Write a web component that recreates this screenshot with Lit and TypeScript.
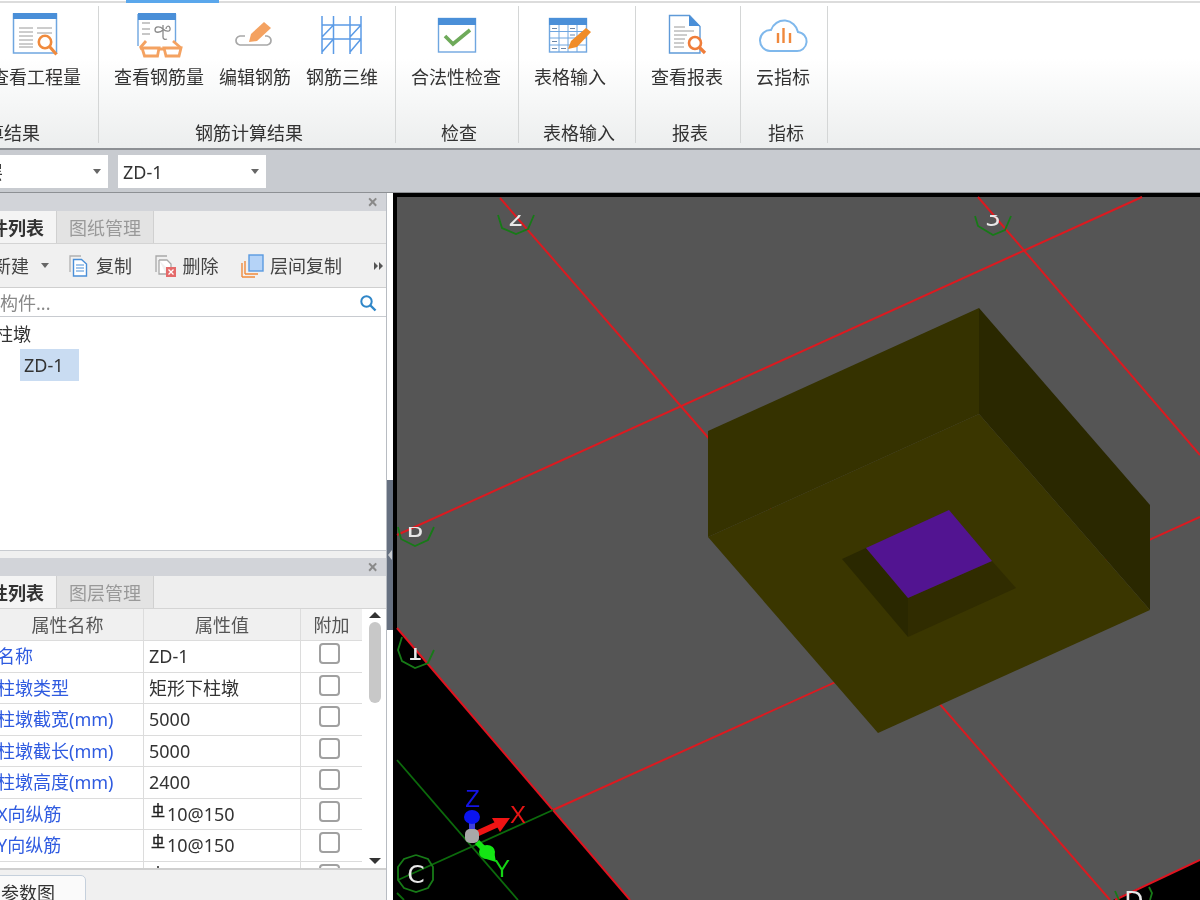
import { LitElement, html, svg, css } from 'lit';
import { customElement } from 'lit/decorators.js';

const rows = [
  { name: '名称', value: 'ZD-1' },
  { name: '柱墩类型', value: '矩形下柱墩' },
  { name: '柱墩截宽(mm)', value: '5000' },
  { name: '柱墩截长(mm)', value: '5000' },
  { name: '柱墩高度(mm)', value: '2400' },
  { name: 'X向纵筋', value: '10@150', rebar: true },
  { name: 'Y向纵筋', value: '10@150', rebar: true },
  { name: '', value: '10@150', rebar: true },
];

const BLUE = '#4a8fd8';
const ORANGE = '#f08a3c';

const iconReport = svg`
  <rect x="13.5" y="14" width="43" height="39" fill="#fff" stroke="#6fa6e0" stroke-width="1.5"/>
  <rect x="13" y="13" width="44" height="6" fill="${BLUE}"/>
  <path d="M19 28h14M19 32h14M19 36h14M19 40h14M19 44h14M19 47h14M37 28h15M37 33h15" stroke="#9a9a9a" fill="none"/>
  <circle cx="45" cy="42" r="6.2" fill="#fff" stroke="${ORANGE}" stroke-width="2.6"/>
  <path d="M49.5 46.5l7 8" stroke="${ORANGE}" stroke-width="3.2"/>`;

const iconGlasses = svg`
  <rect x="138" y="14" width="37.5" height="32" fill="#fff"/>
  <path d="M138 14v32M175.500 14v28" stroke="#6fa6e0" stroke-width="1.4"/>
  <rect x="138" y="13" width="38" height="7" fill="${BLUE}"/>
  <path d="M142 23h8M142 29h8M142 34h8" stroke="#8f8f8f" fill="none" stroke-width="1.2"/>
  <path d="M155 30c0-4 5-4 8-1s8 3 7-1c-1-3-4-2-4 1M155 30c0 3 5 3 8 0M163 25v12c0 2 2 3 4 2" stroke="#8a8a8a" fill="none" stroke-width="1.3"/>
  <path d="M142 48h17l-1.500 8h-13zM164 48h17l-2 8h-13z" fill="#fff" stroke="#f4a261" stroke-width="2.8"/>
  <path d="M159 49h5M142 48l-2 1M146 41l-6 7M173 41l8 7" stroke="#f4a261" stroke-width="2.8" fill="none"/>`;

const iconEdit = svg`
  <path d="M245 36h-5q-4 1-4 4.500t4 4.500h27q4-1 4-4.500t-4-4.500h-2" fill="none" stroke="#a8a8a8" stroke-width="1.7"/>
  <path d="M264 22l7 6-14 13-8 1 2-8z" fill="#f4a261"/>`;

const iconScaffold = svg`
  <path d="M322 16v38M333.500 16v38M350 16v38M361 16v38M322 25h39M322 39h39M322 37l11.500-12M322 52l11.500-13M350 37l11-12M350 52l11-13" stroke="#5b9be6" stroke-width="1.5" fill="none"/>`;

const iconCheck = svg`
  <rect x="438.500" y="18.500" width="37" height="33.500" fill="#fff" stroke="#6fa6e0" stroke-width="1.4"/>
  <rect x="438" y="18" width="38" height="7" fill="${BLUE}"/>
  <path d="M445 36l8 8 17-14" fill="none" stroke="#6eaa5a" stroke-width="3.6"/>`;

const iconTable = svg`
  <rect x="549.500" y="18.500" width="37" height="33.500" fill="#fff" stroke="#6fa6e0" stroke-width="1.4"/>
  <rect x="549" y="18" width="38" height="7" fill="${BLUE}"/>
  <path d="M559 25v27M568 25v27M577 25v27M549 31.500h38M549 38h38M549 45h38" stroke="#6fa6e0" fill="none"/>
  <path d="M552 28.500h5M570 28.500h5M552 41.500h5M552 48.500h5M561 48.500h5M570 35h5" stroke="#6b87a8" fill="none"/>
  <path d="M586 28l5 4-14 15-9 2 3-8z" fill="#f08c28"/>`;

const iconDoc = svg`
  <path d="M669.500 15.500h20l10.500 11v26.500h-30.500z" fill="#fff" stroke="#5f9ad8" stroke-width="1.4"/>
  <path d="M689 15l11 11h-11z" fill="${BLUE}"/>
  <path d="M674 27h11M674 31h20M674 35h13M674 39h11M674 43h10M674 47h10" stroke="#9a9a9a" fill="none"/>
  <circle cx="695" cy="43" r="6" fill="#fff" stroke="#ef7d3a" stroke-width="2.6"/>
  <path d="M699 47l6 6" stroke="#ef7d3a" stroke-width="3.2"/>`;

const iconCloud = svg`
  <path d="M770 51H796A9.500 9.500 0 0 0 798 32A14 14 0 0 0 771 30A10.500 10.500 0 0 0 770 51Z" fill="#fff" stroke="#7fb8ec" stroke-width="2"/>
  <path d="M778 33v10M783.500 28v15M790 33v10" stroke="#f0883c" stroke-width="2.4" fill="none"/>`;

// number glyph on the grid bubbles is cut by the clip box passed in
const bubble = (points: string, label: string, x: number, y: number, clipId?: string) => svg`
  <polyline points="${points}" fill="none" stroke="#177a17" stroke-width="1.8"/>
  <text x="${x}" y="${y}" class="axis" clip-path="${clipId ? `url(#${clipId})` : 'none'}">${label}</text>`;

@customElement('app-root')
export class AppRoot extends LitElement {
  renderRibbon() {
    return html`
      <div class="ribbon">
        <div class="tabline"><span class="tabmark"></span></div>
        <div class="groups">
          <div class="group first">
            <div class="btns">
              <div class="btn">
                <svg class="ic" viewBox="0 6 72 54">${iconReport}</svg>
                <span>查看工程量</span>
              </div>
            </div>
            <div class="glabel">工程量计算结果</div>
          </div>
          <div class="group">
            <div class="btns">
              <div class="btn">
                <svg class="ic" viewBox="114 6 90 54">${iconGlasses}</svg>
                <span>查看钢筋量</span>
              </div>
              <div class="btn">
                <svg class="ic" viewBox="219 6 72 54">${iconEdit}</svg>
                <span>编辑钢筋</span>
              </div>
              <div class="btn">
                <svg class="ic" viewBox="306 6 72 54">${iconScaffold}</svg>
                <span>钢筋三维</span>
              </div>
            </div>
            <div class="glabel">钢筋计算结果</div>
          </div>
          <div class="group">
            <div class="btns">
              <div class="btn">
                <svg class="ic" viewBox="411 6 90 54">${iconCheck}</svg>
                <span>合法性检查</span>
              </div>
            </div>
            <div class="glabel">检查</div>
          </div>
          <div class="group wide">
            <div class="btns">
              <div class="btn">
                <svg class="ic" viewBox="534 6 72 54">${iconTable}</svg>
                <span>表格输入</span>
              </div>
            </div>
            <div class="glabel">表格输入</div>
          </div>
          <div class="group">
            <div class="btns">
              <div class="btn">
                <svg class="ic" viewBox="651 6 72 54">${iconDoc}</svg>
                <span>查看报表</span>
              </div>
            </div>
            <div class="glabel">报表</div>
          </div>
          <div class="group">
            <div class="btns">
              <div class="btn">
                <svg class="ic" viewBox="756 6 54 54">${iconCloud}</svg>
                <span>云指标</span>
              </div>
            </div>
            <div class="glabel">指标</div>
          </div>
        </div>
      </div>
    `;
  }

  renderToolbar() {
    return html`
      <div class="combos">
        <div class="combo floor"><span>首层</span><i class="caret"></i></div>
        <div class="combo part"><span>ZD-1</span><i class="caret"></i></div>
      </div>
    `;
  }

  renderListPanel() {
    return html`
      <div class="panel-head"><span class="close">×</span></div>
      <div class="tabs">
        <div class="tab on first-tab">构件列表</div>
        <div class="tab">图纸管理</div>
      </div>
      <div class="tools">
        <div class="tool new-tool"><span>新建</span><i class="caret"></i></div>
        <div class="tool">
          <svg width="21" height="24" viewBox="0 0 21 24">
            <path d="M1 18V2h11" fill="none" stroke="#b0b0b0" stroke-width="1.3"/>
            <path d="M4.500 5.500h8l5 4.500v12h-13z" fill="#fff" stroke="#4a8fd8" stroke-width="1.4"/>
            <path d="M7 11h8M7 14h8M7 17h8" stroke="#4a8fd8" stroke-width="1.2"/>
          </svg>
          <span>复制</span>
        </div>
        <div class="tool">
          <svg width="22" height="24" viewBox="0 0 22 24">
            <path d="M1 18V2h11" fill="none" stroke="#a8a8a8" stroke-width="1.3"/>
            <path d="M4 6h8l4 4v8M4 6v14h7" fill="#fff" stroke="#a8a8a8" stroke-width="1.3"/>
            <rect x="11" y="13" width="10" height="10" fill="#e46a6a"/>
            <path d="M13.500 15.500l5 5M18.500 15.500l-5 5" stroke="#fff" stroke-width="1.3"/>
          </svg>
          <span>删除</span>
        </div>
        <div class="tool">
          <svg width="23" height="24" viewBox="0 0 23 24">
            <path d="M1 23V9M1 23h13M4 20V7M4 20h13" fill="none" stroke="#f08a3c" stroke-width="1.4"/>
            <rect x="8" y="1" width="14" height="16" fill="#b5d3f7" stroke="#5a9ae0" stroke-width="1.4"/>
          </svg>
          <span>层间复制</span>
        </div>
        <div class="more"><i></i><i></i></div>
      </div>
      <div class="search">
        <span class="placeholder">搜索构件...</span>
        <svg width="18" height="18" viewBox="0 0 18 18">
          <circle cx="7.500" cy="7.500" r="5.200" fill="none" stroke="#2f86c8" stroke-width="2"/>
          <path d="M11.500 11.500l5 5" stroke="#2f86c8" stroke-width="2.400"/>
        </svg>
      </div>
      <div class="tree">
        <div class="tree-root">柱墩</div>
        <div class="tree-leaf">ZD-1</div>
      </div>
    `;
  }

  renderPropPanel() {
    return html`
      <div class="panel-head"><span class="close">×</span></div>
      <div class="tabs">
        <div class="tab on first-tab">属性列表</div>
        <div class="tab">图层管理</div>
      </div>
      <div class="table-wrap">
        <div class="table">
          <div class="tr head">
            <div class="td head-name">属性名称</div>
            <div class="td">属性值</div>
            <div class="td">附加</div>
          </div>
          ${rows.map(
            (r) => html`
              <div class="tr">
                <div class="td name"><span>${r.name}</span></div>
                <div class="td val">
                  ${r.rebar
                    ? html`<svg class="rebar" width="14" height="15" viewBox="0 0 14 15">
                        <path d="M7 0v13M.5 13.500h13M3 3.500h8v6H3z" fill="none" stroke="#222" stroke-width="1.500"/>
                      </svg>`
                    : ''}${r.value}
                </div>
                <div class="td chk"><i class="box"></i></div>
              </div>
            `,
          )}
        </div>
        <div class="scroll">
          <i class="up"></i>
          <i class="thumb"></i>
          <i class="down"></i>
        </div>
      </div>
      <div class="bottom-tabs"><div class="btab">参数图</div></div>
    `;
  }

  renderCanvas() {
    return html`
      <svg class="scene" viewBox="393 193 807 707" width="807" height="707">
        <defs>
          <clipPath id="clip2"><rect x="490" y="215" width="60" height="30"/></clipPath>
          <clipPath id="clip3"><rect x="970" y="215" width="50" height="30"/></clipPath>
          <clipPath id="clipB"><rect x="395" y="527" width="40" height="30"/></clipPath>
          <clipPath id="clip1"><rect x="395" y="648" width="40" height="30"/></clipPath>
          <clipPath id="clipD"><rect x="1110" y="890" width="50" height="10"/></clipPath>
        </defs>
        <rect x="393" y="193" width="807" height="707" fill="#000"/>
        <polygon points="397,197 1200,197 1200,860 1113,900 630,900 397,628" fill="#555"/>

        <g fill="none" stroke="#dc1a20" stroke-width="2">
          <path d="M397 535L1142 197"/>
          <path d="M500 198L1110 900"/>
          <path d="M978 197L1200 455"/>
          <path d="M553 810L1200 517"/>
          <path d="M397 628L630 900" stroke="#e01420"/>
          <path d="M1115 900L1200 860" stroke="#e01420"/>
        </g>
        <g fill="none" stroke="#0c6a0c" stroke-width="1.8">
          <path d="M553 810L398 880"/>
          <path d="M397 760L518 900"/>
          <path d="M397 893L404 900"/>
        </g>

        ${bubble('498,215 502,228 516,234 528,229 534,215', '2', 516, 226, 'clip2')}
        ${bubble('975,216 978,226 993,235 1005,230 1011,216', '3', 993, 226, 'clip3')}
        ${bubble('398,527 401,539 415,546 428,540 434,527', 'B', 415, 537, 'clipB')}
        ${bubble('402,637 398,650 402,661 415,668 428,663 434,650', '1', 415, 660, 'clip1')}
        ${bubble('416,855 428,859 433,867 433,880 428,888 416,892 404,888 398,880 398,867 404,859 416,855', 'C', 416, 883)}
        ${bubble('1115,891 1119,900', 'D', 1134, 909, 'clipD')}
        <polyline points="1149,887 1152,893 1150,900" fill="none" stroke="#177a17" stroke-width="1.8"/>

        <polygon points="708,431 979,308 979,414 708,537" fill="#353200"/>
        <polygon points="979,308 1150,505 1150,610 979,414" fill="#2a2800"/>
        <polygon points="708,537 979,414 1150,610 878,733" fill="#3a3600"/>
        <polygon points="842,559 866,548 908,598 908,637" fill="#2a2800"/>
        <polygon points="908,598 992,561 1016,588 908,637" fill="#302c00"/>
        <polygon points="949,510 992,561 908,598 866,548" fill="#521491"/>

        <g>
          <path d="M472 835V822" stroke="#4040d8" stroke-width="6"/>
          <ellipse cx="472" cy="817" rx="8" ry="7" fill="#0a14f0"/>
          <text x="472.500" y="807" class="gizmo" fill="#1414e6">Z</text>
          <path d="M476 834L498 824" stroke="#f01414" stroke-width="6"/>
          <polygon points="492,818 510,818 500,832" fill="#f01414"/>
          <text x="518" y="823" class="gizmo" fill="#e61414">X</text>
          <path d="M477 842L490 855" stroke="#14e614" stroke-width="6"/>
          <ellipse cx="487" cy="852" rx="8" ry="7" fill="#14e614"/>
          <polygon points="483,858 494,851 496,862" fill="#14e614"/>
          <text x="502" y="877" class="gizmo" fill="#14d214">Y</text>
          <rect x="465" y="829" width="14" height="14" rx="5" fill="#a8a8a8"/>
        </g>
      </svg>
    `;
  }

  render() {
    return html`
      ${this.renderRibbon()}
      ${this.renderToolbar()}
      <div class="main">
        <div class="side">
          <section class="list-panel">${this.renderListPanel()}</section>
          <section class="prop-panel">${this.renderPropPanel()}</section>
        </div>
        <div class="splitter"><div class="grip"><i></i></div></div>
        <div class="canvas">${this.renderCanvas()}</div>
      </div>
    `;
  }

  static styles = css`
    :host {
      display: flex;
      flex-direction: column;
      width: 1200px;
      height: 900px;
      overflow: hidden;
      background: #c8cbd0;
      color: #333;
      font-family: 'Noto Sans', 'Noto Sans CJK SC', sans-serif;
      font-size: 18px;
      line-height: 24px;
      filter: blur(0.5px);
    }

    /* ribbon */
    .ribbon {
      height: 150px;
      flex: none;
      box-sizing: border-box;
      background: linear-gradient(#ffffff 0%, #ffffff 40%, #eceeee 100%);
      border-bottom: 2px solid #8d9094;
    }
    .tabline {
      height: 3px;
      background: linear-gradient(#fff 0 1px, #dcdcdc 1px);
    }
    .tabmark {
      display: block;
      width: 93px;
      height: 3px;
      margin-left: 126px;
      background: #5aa7ec;
    }
    .groups {
      display: flex;
      height: 137px;
      margin-top: 3px;
    }
    .group {
      flex: none;
      display: flex;
      flex-direction: column;
      padding: 0 17px 0 15px;
      border-right: 1px solid #d4d6d6;
      box-sizing: content-box;
    }
    .group.first {
      width: 225px;
      margin-left: -144px;
      align-items: flex-end;
      padding: 0 17px 0 0;
    }
    .group.first .glabel {
      width: 126px;
      padding: 0;
      margin: auto 41px 0 0;
    }
    .group.wide {
      padding-right: 29px;
    }
    .group.wide .glabel {
      margin-right: -29px;
    }
    .btns {
      display: flex;
      gap: 15px;
    }
    .btn {
      display: flex;
      flex-direction: column;
      align-items: center;
    }
    .btn .ic {
      display: block;
      height: 54px;
    }
    .btn span {
      margin-top: 5px;
      white-space: nowrap;
    }
    .glabel {
      margin: auto -17px 0 -15px;
      padding: 0 0 0 4px;
      height: 22px;
      text-align: center;
      white-space: nowrap;
    }

    /* selectors under the ribbon */
    .combos {
      flex: none;
      height: 43px;
      display: flex;
      gap: 10px;
      padding-top: 5px;
      box-sizing: border-box;
      border-bottom: 1px solid #8d9094;
    }
    .combo {
      height: 33px;
      background: #fff;
      display: flex;
      align-items: center;
      justify-content: space-between;
      padding: 0 7px 0 5px;
      box-sizing: border-box;
    }
    .combo.floor {
      width: 146px;
      margin-left: -38px;
    }
    .combo.part {
      width: 148px;
    }
    .caret {
      display: inline-block;
      width: 0;
      height: 0;
      border-left: 4px solid transparent;
      border-right: 4px solid transparent;
      border-top: 5px solid #666;
    }

    .main {
      flex: 1;
      display: flex;
      min-height: 0;
    }
    .side {
      width: 387px;
      flex: none;
      box-sizing: border-box;
      display: flex;
      flex-direction: column;
      background: #f0f0f0;
      border-right: 1px solid #b8bcc2;
      overflow: hidden;
    }
    .list-panel {
      height: 358px;
      flex: none;
      display: flex;
      flex-direction: column;
      background: #fff;
      border-bottom: 1px solid #c8cbd0;
      box-sizing: border-box;
    }
    .prop-panel {
      flex: 1;
      margin-top: 7px;
      display: flex;
      flex-direction: column;
      min-height: 0;
    }
    .panel-head {
      height: 18px;
      flex: none;
      display: flex;
      justify-content: flex-end;
      align-items: center;
      padding-right: 8px;
      background: #d2d4d9;
    }
    .close {
      font-size: 19px;
      font-weight: 700;
      line-height: 18px;
      color: #8a8a8a;
    }
    .tabs {
      height: 33px;
      flex: none;
      display: flex;
      background: #eeeeee;
      border-bottom: 1px solid #d4d4d4;
      box-sizing: border-box;
    }
    .tab {
      width: 97px;
      display: flex;
      align-items: center;
      justify-content: center;
      padding-top: 1px;
      background: #e3e3e3;
      color: #999;
      border-right: 1px solid #d0d0d0;
      box-sizing: border-box;
    }
    .tab.on {
      background: #f4f4f4;
      color: #333;
      font-weight: 700;
    }
    .tab.first-tab {
      width: 85px;
      margin-left: -28px;
      justify-content: flex-start;
    }
    .tools {
      height: 44px;
      flex: none;
      display: flex;
      align-items: center;
      background: #f0f0f0;
      border-bottom: 1px solid #cfcfcf;
      box-sizing: border-box;
    }
    .tool {
      display: flex;
      align-items: center;
      gap: 6px;
      color: #444;
      margin-right: 22.5px;
    }
    .new-tool {
      margin-left: -7px;
      gap: 12px;
      margin-right: 20px;
    }
    .more {
      margin-left: auto;
      margin-right: 3px;
      display: flex;
      gap: 1px;
    }
    .more i {
      width: 0;
      height: 0;
      border-top: 4px solid transparent;
      border-bottom: 4px solid transparent;
      border-left: 4px solid #555;
    }
    .search {
      height: 29px;
      flex: none;
      display: flex;
      align-items: center;
      justify-content: space-between;
      padding: 2px 9px 0 0;
      background: #fff;
      border-bottom: 1px solid #c8cbd0;
      box-sizing: border-box;
    }
    .placeholder {
      margin-left: -36px;
      color: #888;
    }
    .tree {
      flex: 1;
      padding-top: 4px;
    }
    .tree-root {
      margin-left: -5px;
      height: 28px;
      line-height: 26px;
    }
    .tree-leaf {
      width: 59px;
      height: 32px;
      margin: 0 0 0 20px;
      padding-left: 4px;
      box-sizing: border-box;
      line-height: 32px;
      background: #c9dcf2;
    }

    .table-wrap {
      flex: none;
      height: 259px;
      overflow: hidden;
      display: flex;
      background: #fff;
      border-bottom: 2px solid #cfcfcf;
    }
    .table {
      width: 362px;
      flex: none;
    }
    .tr {
      display: grid;
      grid-template-columns: 144px 157px 62px;
      height: 31.5px;
      box-sizing: border-box;
      border-bottom: 1px solid #dcdcdc;
    }
    .td {
      display: flex;
      align-items: center;
      border-right: 1px solid #dcdcdc;
      white-space: nowrap;
      overflow: hidden;
    }
    .head {
      height: 32px;
      background: #f0f0f0;
    }
    .head .td {
      justify-content: center;
      color: #555;
    }
    .head .head-name {
      padding-right: 8px;
    }
    .name {
      color: #2f5be0;
    }
    .name span {
      margin-left: -3px;
    }
    .val {
      padding-left: 5px;
      color: #333;
    }
    .rebar {
      margin: -7px 2px 0 2px;
      flex: none;
    }
    .chk {
      justify-content: center;
      padding: 0 4px 5px 0;
    }
    .box {
      display: block;
      width: 21px;
      height: 21px;
      border: 2px solid #a0a0a0;
      border-radius: 4px;
      box-sizing: border-box;
      background: #fff;
    }
    .scroll {
      flex: 1;
      display: flex;
      flex-direction: column;
      align-items: center;
      padding: 3px 0 0 2px;
      background: #fff;
    }
    .up {
      width: 0;
      height: 0;
      border-left: 6px solid transparent;
      border-right: 6px solid transparent;
      border-bottom: 6px solid #333;
    }
    .thumb {
      width: 12px;
      height: 81px;
      margin-top: 4px;
      border-radius: 6px;
      background: #c8c8c8;
    }
    .down {
      width: 0;
      height: 0;
      margin-top: auto;
      margin-bottom: 4px;
      border-left: 6px solid transparent;
      border-right: 6px solid transparent;
      border-top: 6px solid #333;
    }
    .bottom-tabs {
      flex: 1;
      padding-top: 5px;
      background: #f0f0f0;
    }
    .btab {
      width: 87px;
      height: 40px;
      margin-left: -1px;
      box-sizing: border-box;
      padding: 5px 0 0 1px;
      background: #fafafa;
      border: 1px solid #c5d0dc;
      border-radius: 0 5px 0 0;
    }

    .splitter {
      width: 6px;
      flex: none;
      background: #fff;
    }
    .grip {
      margin-top: 287px;
      height: 150px;
      background: #667080;
      display: flex;
      align-items: center;
      justify-content: center;
    }
    .grip i {
      width: 0;
      height: 0;
      border-top: 5px solid transparent;
      border-bottom: 5px solid transparent;
      border-right: 4px solid #c8cbd0;
    }
    .canvas {
      flex: 1;
      min-width: 0;
      background: #000;
    }
    .scene {
      display: block;
    }
    .axis {
      fill: #e8e8e8;
      font-size: 25px;
      text-anchor: middle;
      font-family: 'DejaVu Sans', sans-serif;
    }
    .gizmo {
      font-size: 24px;
      text-anchor: middle;
      font-family: 'Liberation Sans', sans-serif;
    }
  `;
}
